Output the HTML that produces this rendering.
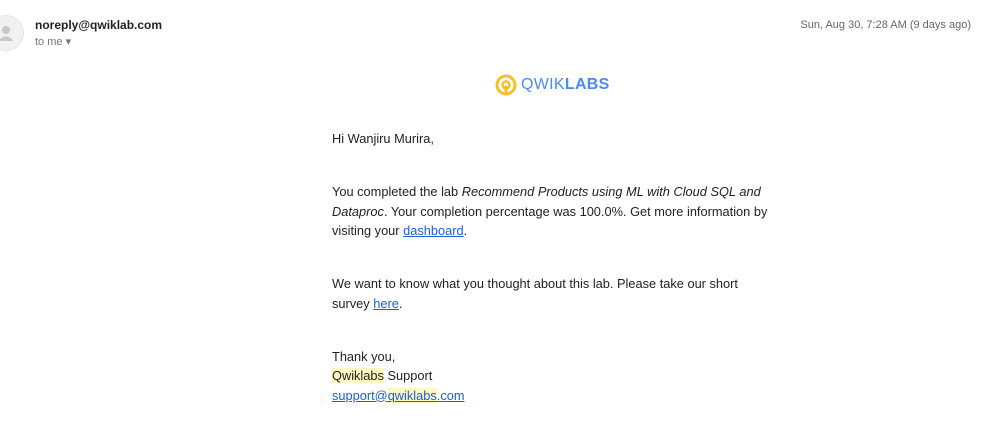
<!DOCTYPE html>
<html><head><style>
body{margin:0;width:989px;height:421px;background:#fff;font-family:"Liberation Sans",Arial,sans-serif;position:relative;overflow:hidden;color:#222}
.av{position:absolute;left:-12px;top:15px;width:34px;height:34px;border-radius:50%;background:#f1f1f1;border:1px solid #e6e6e6}
.from{position:absolute;left:35px;top:18px;font-size:12px;font-weight:bold;color:#222}
.to{position:absolute;left:35px;top:35px;font-size:11px;color:#777}
.date{position:absolute;right:18px;top:19px;font-size:11px;color:#666}
.logo{position:absolute;left:495px;top:73px;height:24px;display:flex;align-items:center}
.lt{font-size:16px;color:#4a8af4;margin-left:4px;letter-spacing:0.3px}
.body{position:absolute;left:332px;top:129px;font-size:12.8px;line-height:19.5px;width:445px}
p{margin:0}
a{color:#1a5fd8;text-decoration:underline}
.hl{background:#fff7c2}
</style></head><body>
<div class="av"><svg width="34" height="34" viewBox="0 0 34 34"><circle cx="17" cy="14" r="4" fill="#c8c8c8"/><path d="M10 24 q7 -7 14 0 v1 h-14z" fill="#c8c8c8"/></svg></div>
<div class="from">noreply@qwiklab.com</div>
<div class="to">to me &#9662;</div>
<div class="date">Sun, Aug 30, 7:28 AM (9 days ago)</div>
<div class="logo"><svg width="22" height="22" viewBox="0 0 22 22"><circle cx="11" cy="11" r="9" fill="none" stroke="#f6c026" stroke-width="3"/><path d="M11 19 V13" stroke="#f6c026" stroke-width="3" stroke-linecap="round"/><circle cx="11" cy="11" r="3.5" fill="none" stroke="#f6c026" stroke-width="2.5"/></svg><span class="lt">QWIK<b>LABS</b></span></div>
<div class="body">
<p>Hi Wanjiru Murira,</p>
<p style="margin-top:33.5px">You completed the lab <i>Recommend Products using ML with Cloud SQL and Dataproc</i>. Your completion percentage was 100.0%. Get more information by visiting your <a>dashboard</a>.</p>
<p style="margin-top:33.5px">We want to know what you thought about this lab. Please take our short survey <a>here</a>.</p>
<p style="margin-top:33.5px">Thank you,<br><span class="hl">Qwiklabs</span> Support<br><a>support@<span class="hl">qwiklabs</span>.com</a></p>
</div>
</body></html>
